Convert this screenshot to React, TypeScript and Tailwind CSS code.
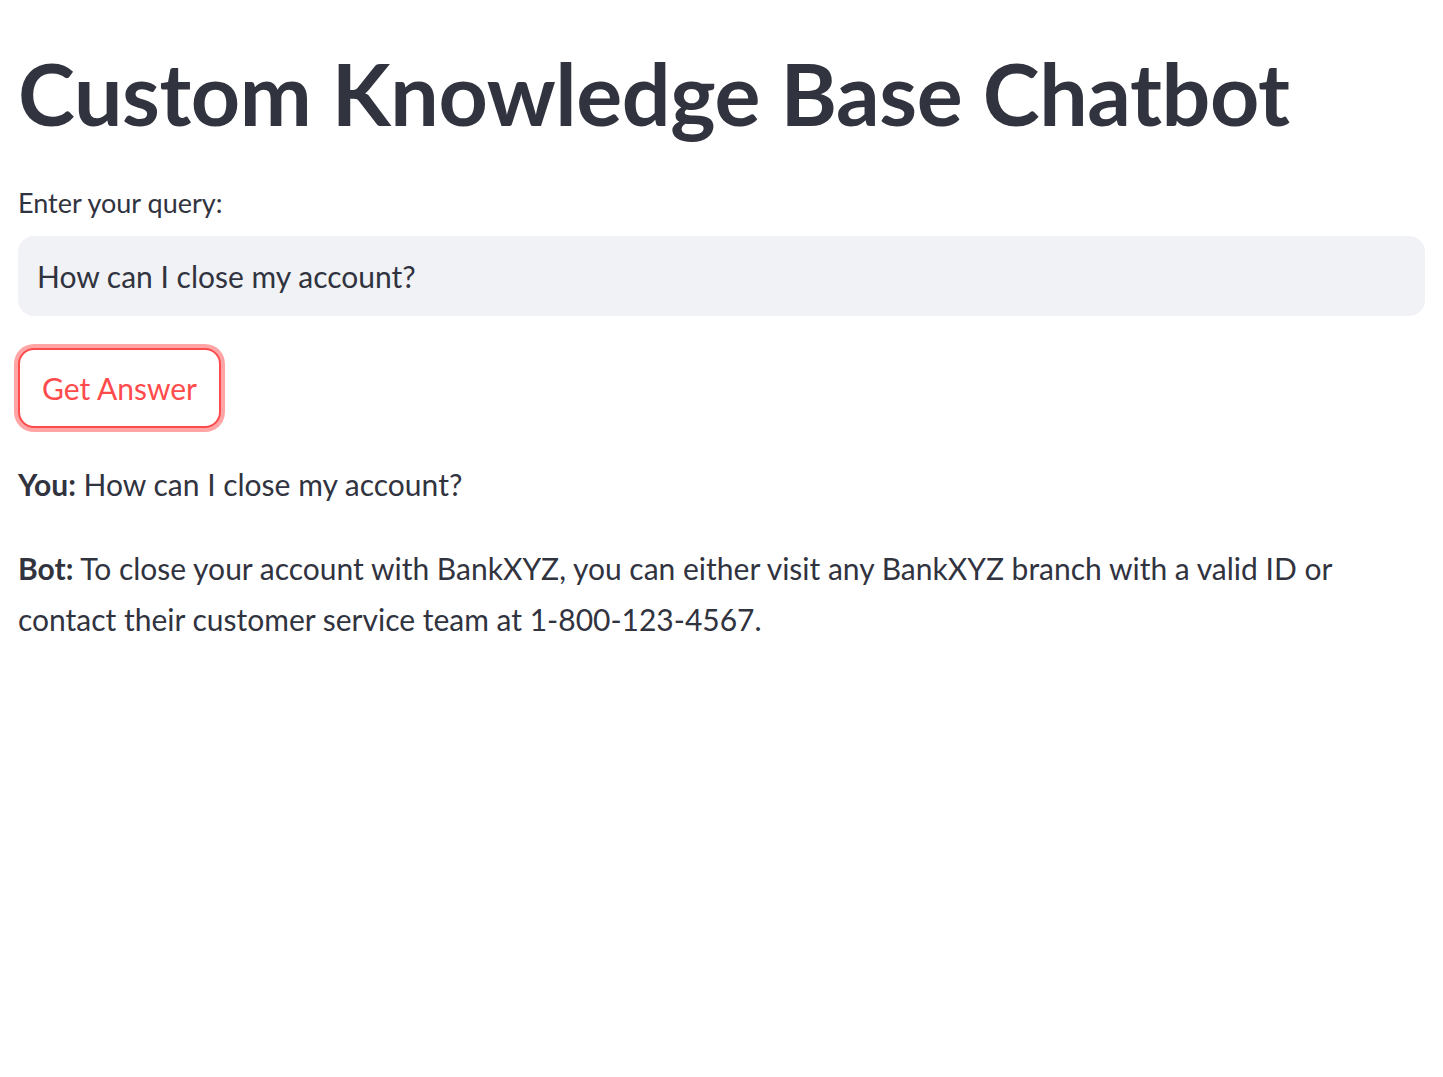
import React from "react";

export default function App() {
  return (
    <div
      className="min-h-screen bg-white px-[18px] text-[#31333f]"
      style={{ fontFamily: "Lato, 'Noto Sans', sans-serif" }}
    >
      <h1 className="pt-[40px] text-[86px] font-bold leading-[105.6px] tracking-[-0.4px]">
        Custom Knowledge Base Chatbot
      </h1>
      <label className="mt-[35px] block text-[27px] leading-[44.8px]">Enter your query:</label>
      <div className="mt-[11px] flex h-[80px] items-center rounded-[16px] bg-[#f0f2f6] px-[19px] text-[30px]">
        How can I close my account?
      </div>
      <button className="mt-[32px] flex h-[80px] w-[203px] items-center justify-center rounded-[16px] border-2 border-[#ff4b4b] bg-white text-[30px] text-[#ff4b4b] shadow-[0_0_0_4px_rgba(255,75,75,0.5)]">
        Get Answer
      </button>
      <p className="mt-[31px] text-[30px] leading-[51.2px]">
        <strong className="font-bold">You:</strong> How can I close my account?
      </p>
      <p className="mt-[32px] text-[30px] leading-[51.2px]">
        <strong className="font-bold">Bot:</strong> To close your account with BankXYZ, you can either visit any BankXYZ branch with a valid ID or
        <br />
        contact their customer service team at 1-800-123-4567.
      </p>
    </div>
  );
}
